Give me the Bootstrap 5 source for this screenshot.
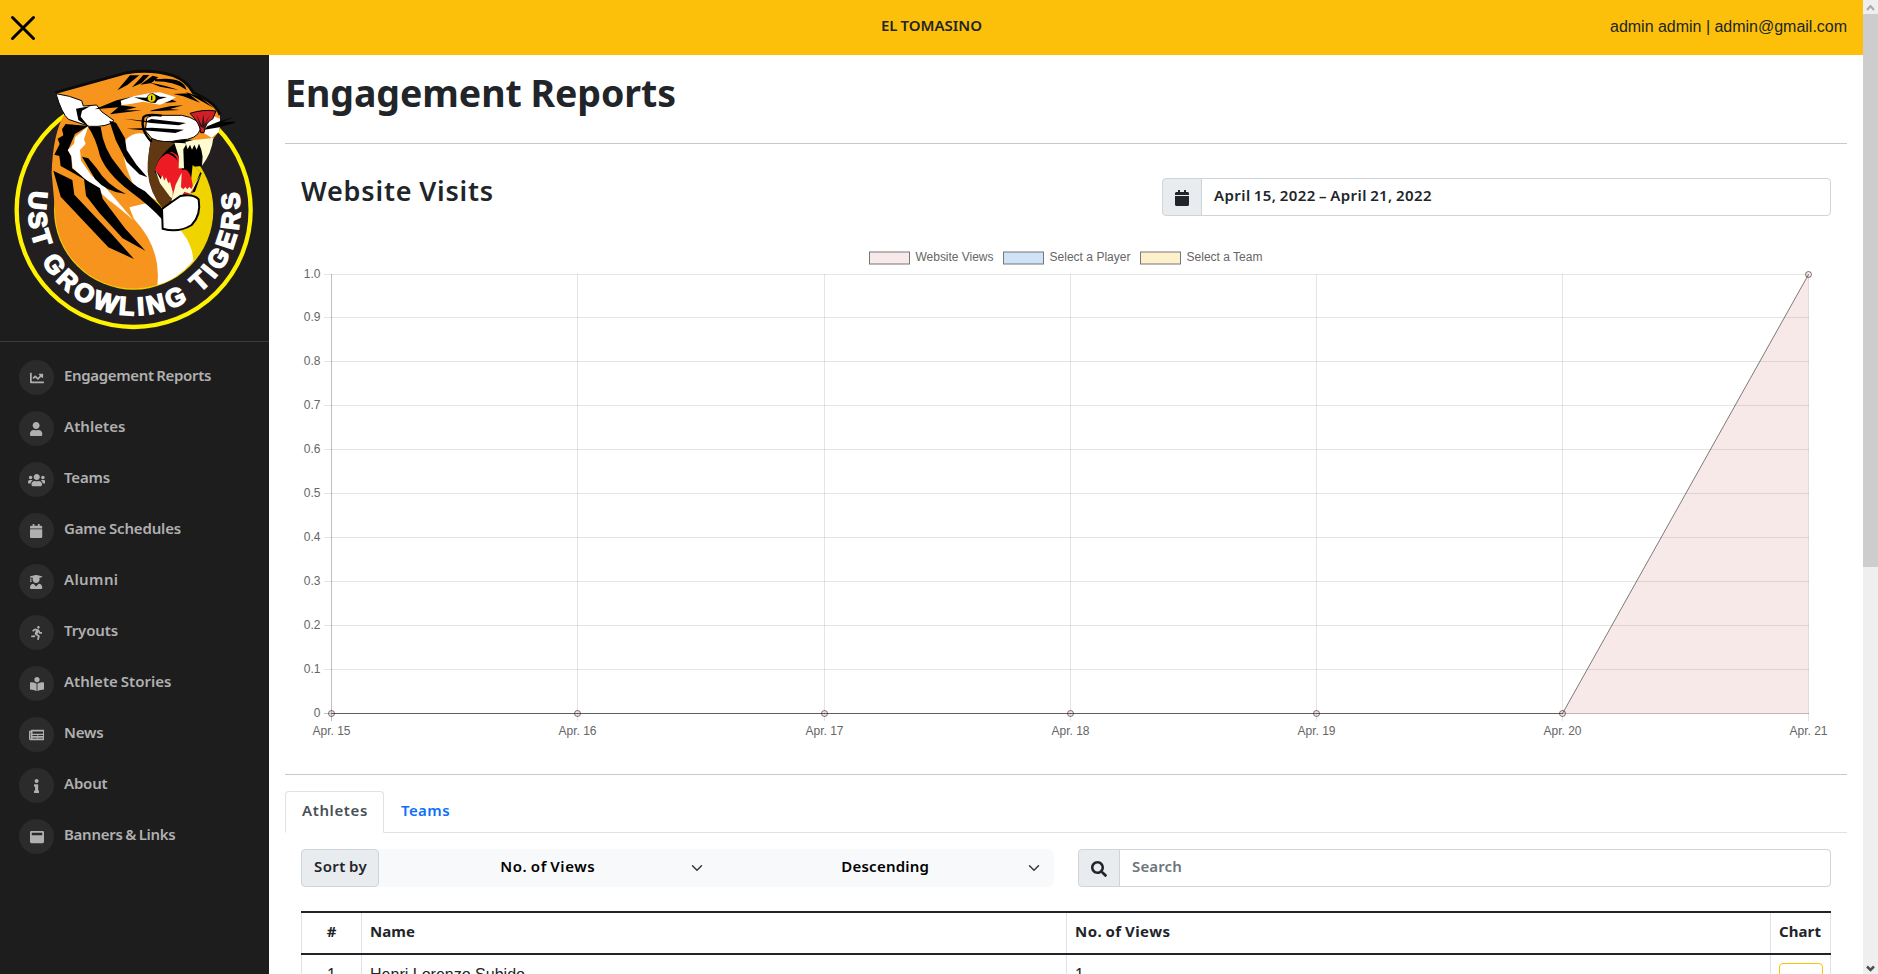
<!DOCTYPE html>
<html lang="en">
<head>
<meta charset="utf-8">
<title>Engagement Reports</title>
<link rel="stylesheet" href="https://cdn.jsdelivr.net/npm/bootstrap@5.3.0/dist/css/bootstrap.min.css">
<style>
body{height:974px;overflow:hidden;font-family:"Liberation Sans",Arial,sans-serif;color:#212529;background:#fff}
.brandfont{font-family:"Noto Sans",sans-serif;font-weight:600;font-size:15px}
.brandfont span,.fit{white-space:nowrap}
.brandfont .fit,.form-control .fit{word-spacing:-1px}
.topbar{height:55px;background:#fcc00a;padding:0 16px 0 8px}
.side{width:269px;background:#1d1d1d}
.logo-box{height:287px;border-bottom:1px solid #3c3c3c}
.menu{padding-top:10px}
.menu a{height:51px;padding-left:19px;gap:10px;color:#b0b0b0;text-decoration:none}
.menu a>span{margin-top:-4px}
.dot{width:35px;height:35px;background:#2b2b2b;border-radius:50%}
.dot svg,.input-group-text svg{height:14px;fill:currentColor;display:block}
.body-pane{width:1594px;padding:0 16px}
.page-title{font-size:37.5px;font-weight:700;height:88px;line-height:46px;padding-top:15px}
hr.rule{margin:0;border:0;height:1px;background:#c8c9ca;opacity:1}
.sub{font-size:27px;line-height:36px;height:36px}
.visits{height:67px;padding:34px 16px 0}
.input-group-text,.form-control{height:38px}
.dates{width:669px}
.form-control,.input-group-text{font-family:"Noto Sans",sans-serif;font-size:15px;font-weight:600;color:#212529}
.input-group-text,.form-control{padding-top:5px;padding-bottom:9px;border-color:#ced4da;background-color:#fff}
.input-group-text{background:#e9ecef}
.input-group-text.pic{padding:1px 12px 0}
.form-control.search{color:#6c757d}
.form-control{border-radius:4px}
.input-group-text{border-radius:4px}
.chart{display:block;margin:0 0 0 16px;font:12px "Liberation Sans",Arial,sans-serif}
.nav-tabs{border-color:#dee2e6;height:42px}
.nav-tabs .nav-link{height:42px;padding:6px 16px;line-height:24px;color:#0d6efd;border-radius:4px 4px 0 0}
.nav-tabs .nav-link.active{color:#495057;width:99px}
.filters{padding:16px 16px 0;gap:24px}
.sorter{width:753px;flex:none}
.pick{width:337.5px;height:38px;background:#f8f9fa;color:#000;position:relative;padding-bottom:3px}
.pick svg{position:absolute;right:14px;top:13px}
.grid-wrap{padding:24px 16px 0}
.grid-wrap table{width:1530px;table-layout:fixed;border-collapse:collapse}
.grid-wrap th,.grid-wrap td{border-left:1px solid #dee2e6;border-right:1px solid #dee2e6;padding:8px;vertical-align:top;line-height:24px}
.grid-wrap th{border-top:2px solid #212529;border-bottom:2px solid #212529;height:42px;font-weight:700;padding:6px 8px}
.outline{height:34px;width:44px;border:1px solid #ffc107;border-radius:4px}
.sbar{width:15px;background:#efefef;height:974px}
.sbar .thumb{height:553px;background:#cdcdcd}
</style>
</head>
<body>
<div class="d-flex">
<div style="width:1863px">
<header class="topbar d-flex align-items-center position-relative">
<svg width="30" height="30" viewBox="0 0 30 30"><path d="M4.500 4.500L25.500 25.500M25.500 4.500L4.500 25.500" stroke="#000" stroke-width="3" stroke-linecap="round"/></svg>
<div class="brandfont position-absolute start-50 translate-middle-x" style="top:14px"><span class="fit" data-w="101">EL TOMASINO</span></div>
<div class="ms-auto" style="margin-top:-2px"><span class="fit" data-w="237">admin admin | admin@gmail.com</span></div>
</header>
<div class="d-flex">
<aside class="side" style="height:919px">
<div class="logo-box">
<svg width="269" height="286" viewBox="0 15 807 858">
<circle cx="401" cy="480" r="351" fill="#231f20" stroke="#fff200" stroke-width="13"/>
<circle cx="401" cy="480" r="239" fill="#f0d400"/>
<path d="M399 498L385 470L450 440L545 545Q578 585 580 632Q530 690 472 705Z" fill="#fff"/>
<path d="M165 128L380 68Q455 56 520 77Q560 92 580 128Q650 160 660 195L660 240L640 266L530 275L450 262L440 360L470 452L388 472L400 505Q485 595 472 704A235 235 0 0 1 165 480L155 370Q158 250 195 190Z" fill="#f7941d"/>
<path d="M165 128L380 68Q455 56 520 77Q560 92 580 128Q650 160 660 195" fill="none" stroke="#0b0b0b" stroke-width="9"/>
<!-- ear and cheek fur -->
<path d="M168 131L208 139L245 152L250 168L290 165L305 185L342 212Q325 232 268 229L205 208Q185 190 168 131Z" fill="#fff" stroke="#000" stroke-width="3"/>
<path d="M228 176L272 168L246 182L242 200L268 232L235 210Z"/>
<path d="M376 270Q405 240 438 254L458 280L444 370L470 452L402 410L380 355Q365 310 376 270Z" fill="#fff"/>
<!-- neck and shoulder stripes -->
<path d="M197 222L265 228L225 252L204 300L214 320L216 355L250 380L300 415L310 425L306 430L252 388L225 372L182 348L178 318L163 314L179 282L173 266L190 256L186 238Z"/>
<path d="M265 228L252 268L257 282L240 300L243 332L275 377L310 405Q345 445 400 510Q360 475 325 449L218 354L214 318L203 300L222 281L225 262Z" fill="#fff"/>
<path d="M160 362L217 390L223 434L335 552L402 627L325 592L182 440Z"/>
<path d="M252 386L300 415L308 446L376 536L436 602L368 565L299 490L258 437Z"/>
<path d="M264 230L302 230Q310 300 355 350Q390 402 435 424L484 472L488 510Q450 468 390 424Q320 370 300 318Q288 265 264 230Z"/>
<path d="M328 212L348 218L375 265L380 300L410 345L442 382L418 373L380 335L347 270Z"/>
<path d="M246 320L265 325L290 355Q320 405 378 432Q320 427 285 387Z"/>
<!-- forehead and cheek stripes -->
<path d="M352 121L390 76L418 76L382 105ZM396 112L430 75L448 75L425 99ZM421 104L458 77L475 82L454 99ZM465 88Q550 78 560 120Q525 94 465 94ZM450 98Q500 107 536 120L480 110ZM520 132L565 130L600 158L550 139ZM555 125L600 140L641 174Z"/>
<path d="M284 178L350 151L402 139L370 152L362 166L410 172L375 181L425 181L330 193L355 172ZM455 181L510 169L550 166L510 177L540 180L450 184ZM460 126L485 132L530 156L478 160L515 145Z"/>
<path d="M362 152L400 139L455 128L480 127L528 142L510 152L480 164L430 155L390 162L365 166Z" fill="#fff"/>
<path d="M402 142L438 143L458 130L480 140L501 141L474 149L466 159L444 155Z"/>
<circle cx="455" cy="144" r="13" fill="#f0dc00" stroke="#000" stroke-width="2"/><path d="M453 137h4v14h-4z"/>
<!-- open mouth -->
<path d="M454 262Q438 340 450 400Q464 445 490 477L545 438L585 425L605 370L582 350L604 348L610 280L580 270Z" fill="#000"/>
<path d="M578 345L601 366L575 430L571 410Z" fill="#f0d400"/>
<path d="M457 263L524 280Q468 325 464 365L520 445L490 477Q448 430 443 365Q441 310 457 263Z" fill="#603913"/>
<path d="M465 360Q475 315 515 305Q550 320 545 360Q570 350 578 405L578 428L515 440Q495 390 465 360Z" fill="#ed1c24"/>
<path d="M500 305Q525 305 535 335Q520 315 500 310Z"/>
<path d="M466 360L482 388L487 376L493 392L498 382L505 400L510 395L518 425V446L510 440L480 400Z" fill="#fffbd0"/>
<path d="M523 278L556 280L558 284L550 298L552 355H536L537 322ZM556 276L563 298L570 284L576 299L583 284L590 299L597 281L604 299L608 320L606 347Q635 310 640 264L580 270ZM545 368L527 404L514 454L540 448L553 425L570 431L606 369L574 417L568 411L562 418L556 411L550 418L543 412Z" fill="#fffbd0"/>
<path d="M486 477Q505 463 541 438Q581 430 596 448Q604 495 575 525Q535 550 488 536Z" fill="#fff" stroke="#000" stroke-width="6"/>
<!-- muzzle -->
<path d="M436 242L440 206Q445 195 486 196H545Q600 205 601 238Q592 269 540 270Q490 282 455 265Z" fill="#fff" stroke="#000" stroke-width="3"/>
<path d="M455 276Q420 240 430 202Q438 190 485 197" fill="none" stroke="#000" stroke-width="7"/>
<path d="M454 207L558 219L536 226L454 219L372 206L441 213ZM455 233L552 239L526 249L380 236Z"/>
<path d="M611 249Q615 220 641 199L660 206L657 245L635 263Z" fill="#fff"/>
<path d="M622 229L655 215L705 200L665 216L706 215L705 218L658 232L613 239Z"/>
<path d="M570 190Q610 177 648 183L638 207Q617 215 612 248L602 248Q601 220 570 190Z" fill="#cf2027" stroke="#000" stroke-width="3"/>
<path d="M590 195L605 225L610 193L614 223L628 196L613 236L600 229Z" fill="#411"/>
<path id="ring" d="M91 422A317 317 0 1 0 711 404" fill="none"/>
<text fill="#fff" stroke="#fff" stroke-width="5" font-family="Liberation Sans,Arial,sans-serif" font-weight="700" font-size="76"><textPath href="#ring" textLength="1105" lengthAdjust="spacing">UST GROWLING TIGERS</textPath></text>
</svg>
</div>
<nav class="menu brandfont d-flex flex-column" id="menu"></nav>
</aside>
<main class="body-pane">
<h1 class="page-title brandfont m-0"><span class="fit" data-w="391">Engagement Reports</span></h1>
<hr class="rule">
<div class="visits d-flex justify-content-between">
<h2 class="sub brandfont m-0" style="margin-top:-5px!important"><span class="fit" data-w="193">Website Visits</span></h2>
<div class="input-group dates">
<span class="input-group-text pic"><svg viewBox="0 0 448 512" style="height:16px"><use href="#cal"/></svg></span>
<div class="form-control"><span class="fit" data-w="218">April 15, 2022 – April 21, 2022</span></div>
</div>
</div>
<svg class="chart" id="chart" width="1546" height="563" viewBox="301 211 1546 563"></svg>
<hr class="rule">
<ul class="nav nav-tabs brandfont" style="margin-top:16px">
<li class="nav-item"><a class="nav-link active"><span class="fit" data-w="66">Athletes</span></a></li>
<li class="nav-item"><a class="nav-link"><span class="fit" data-w="49">Teams</span></a></li>
</ul>
<div class="filters d-flex brandfont">
<div class="sorter d-flex">
<div class="input-group-text" style="width:78px"><span class="fit" data-w="53">Sort by</span></div>
<div class="pick d-flex align-items-center justify-content-center"><span class="fit" data-w="95">No. of Views</span><svg width="12" height="12" viewBox="0 0 16 16"><path d="M2 5l6 6 6-6" fill="none" stroke="#343a40" stroke-width="2" stroke-linecap="round" stroke-linejoin="round"/></svg></div>
<div class="pick rounded-end d-flex align-items-center justify-content-center"><span class="fit" data-w="88">Descending</span><svg width="12" height="12" viewBox="0 0 16 16"><path d="M2 5l6 6 6-6" fill="none" stroke="#343a40" stroke-width="2" stroke-linecap="round" stroke-linejoin="round"/></svg></div>
</div>
<div class="input-group">
<span class="input-group-text pic"><svg viewBox="0 0 512 512" style="height:16px"><path d="M505 442.700L405.300 343c-4.500-4.500-10.600-7-17-7H372c27.600-35.300 44-79.700 44-128C416 93.100 322.900 0 208 0S0 93.100 0 208s93.100 208 208 208c48.300 0 92.700-16.400 128-44v16.300c0 6.400 2.500 12.500 7 17l99.700 99.700c9.400 9.400 24.600 9.400 33.900 0l28.300-28.300c9.400-9.400 9.400-24.600.1-34zM208 336c-70.700 0-128-57.200-128-128 0-70.700 57.200-128 128-128 70.700 0 128 57.200 128 128 0 70.700-57.200 128-128 128z"/></svg></span>
<div class="form-control search"><span class="fit" data-w="50">Search</span></div>
</div>
</div>
<div class="grid-wrap">
<table>
<colgroup><col style="width:60px"><col style="width:705px"><col style="width:704px"><col style="width:60px"></colgroup>
<thead class="brandfont"><tr><th class="text-center">#</th><th><span class="fit" data-w="45">Name</span></th><th><span class="fit" data-w="95.500">No. of Views</span></th><th><span class="fit" data-w="42">Chart</span></th></tr></thead>
<tbody><tr><td class="text-center">1</td><td><span class="fit" data-w="155">Henri Lorenzo Subido</span></td><td>1</td><td><div class="outline"></div></td></tr></tbody>
</table>
</div>
</main>
</div>
</div>
<div class="sbar">
<svg width="15" height="14" class="d-block"><path d="M4 10l3.500-4 3.500 4" fill="none" stroke="#a8a8a8" stroke-width="2"/></svg>
<div class="thumb"></div>
<svg width="15" height="14" class="d-block" style="margin-top:393px"><path d="M4 6.500l3.500 3.500 3.500-3.500" fill="none" stroke="#505050" stroke-width="2.500"/></svg>
</div>
</div>
<svg width="0" height="0" class="position-absolute"><defs><path id="cal" d="M12 192h424c6.600 0 12 5.400 12 12v260c0 26.500-21.500 48-48 48H48c-26.500 0-48-21.500-48-48V204c0-6.600 5.400-12 12-12zm436-44v-36c0-26.500-21.500-48-48-48h-48V12c0-6.600-5.400-12-12-12h-40c-6.600 0-12 5.400-12 12v52H160V12c0-6.600-5.400-12-12-12h-40c-6.600 0-12 5.400-12 12v52H48C21.500 64 0 85.500 0 112v36c0 6.600 5.400 12 12 12h424c6.600 0 12-5.400 12-12z"/></defs></svg>
<script src="https://cdn.jsdelivr.net/npm/bootstrap@5.3.0/dist/js/bootstrap.bundle.min.js"></script>
<script>
// sidebar entries: label, text width, icon view width, icon path
const items = [
["Engagement Reports",147,512,"M496 384H64V80c0-8.840-7.160-16-16-16H16C7.160 64 0 71.160 0 80v336c0 17.670 14.330 32 32 32h464c8.840 0 16-7.160 16-16v-32c0-8.840-7.160-16-16-16zM464 96H345.940c-21.380 0-32.090 25.850-16.970 40.970l32.400 32.400L288 242.750l-73.370-73.370c-12.500-12.500-32.760-12.500-45.250 0l-68.690 68.690c-6.250 6.250-6.250 16.380 0 22.630l22.620 22.620c6.250 6.250 16.380 6.250 22.630 0L192 237.250l73.370 73.370c12.500 12.500 32.760 12.500 45.250 0l96-96 32.400 32.400c15.120 15.120 40.970 4.410 40.970-16.970V112c.01-8.840-7.150-16-15.990-16z"],
["Athletes",61.5,448,"M224 256c70.700 0 128-57.300 128-128S294.700 0 224 0 96 57.300 96 128s57.300 128 128 128zm89.600 32h-16.700c-22.200 10.200-46.900 16-72.900 16s-50.600-5.800-72.900-16h-16.700C60.200 288 0 348.200 0 422.400V464c0 26.500 21.500 48 48 48h352c26.500 0 48-21.500 48-48v-41.600c0-74.200-60.200-134.400-134.400-134.400z"],
["Teams",46,640,"M96 224c35.300 0 64-28.700 64-64s-28.700-64-64-64-64 28.700-64 64 28.700 64 64 64zm448 0c35.300 0 64-28.700 64-64s-28.700-64-64-64-64 28.700-64 64 28.700 64 64 64zm32 32h-64c-17.600 0-33.500 7.100-45.100 18.600 40.300 22.100 68.900 62 75.100 109.400h66c17.700 0 32-14.300 32-32v-32c0-35.300-28.700-64-64-64zm-256 0c61.900 0 112-50.100 112-112S381.900 32 320 32 208 82.100 208 144s50.100 112 112 112zm76.800 32h-8.300c-20.800 10-43.900 16-68.500 16s-47.600-6-68.500-16h-8.300C179.600 288 128 339.600 128 403.200V432c0 26.500 21.500 48 48 48h288c26.500 0 48-21.500 48-48v-28.800c0-63.600-51.600-115.200-115.200-115.200zm-223.700-13.400C161.500 263.100 145.600 256 128 256H64c-35.300 0-64 28.700-64 64v32c0 17.700 14.300 32 32 32h65.900c6.300-47.400 34.900-87.300 75.200-109.400z"],
["Game Schedules",117,448,document.getElementById("cal").getAttribute("d")],
["Alumni",54.5,448,"M319.400 320.600L224 416l-95.400-95.400C57.100 323.700 0 382.200 0 454.400v9.600c0 26.500 21.500 48 48 48h352c26.500 0 48-21.500 48-48v-9.600c0-72.200-57.100-130.700-128.600-133.800zM13.600 79.800l6.400 1.500v58.400c-7 4.200-12 11.500-12 20.300 0 8.400 4.600 15.400 11.100 19.700L3.500 242c-1.700 6.900 2.100 14 7.600 14h41.800c5.500 0 9.300-7.100 7.600-14l-15.600-62.300C51.400 175.400 56 168.400 56 160c0-8.800-5-16.100-12-20.300V87.100l66 15.900c-8.600 17.200-14 36.400-14 57 0 70.700 57.300 128 128 128s128-57.300 128-128c0-20.600-5.300-39.800-14-57l96.300-23.200c18.200-4.400 18.200-27.100 0-31.500l-190.400-46c-13-3.100-26.700-3.100-39.700 0L13.600 48.200c-18.100 4.400-18.100 27.200 0 31.600z"],
["Tryouts",54,416,"M272 96c26.510 0 48-21.490 48-48S298.510 0 272 0s-48 21.490-48 48 21.490 48 48 48zM113.690 317.470l-14.800 34.520H32c-17.670 0-32 14.330-32 32s14.330 32 32 32h77.450c19.250 0 36.580-11.440 44.110-29.090l8.790-20.520-10.670-6.300c-17.320-10.230-30.060-25.370-37.990-42.610zM384 223.990h-44.030l-26.060-53.250c-12.500-25.550-35.450-44.230-61.780-50.940l-71.080-21.140c-28.300-6.800-57.770-.55-80.840 17.140l-39.670 30.410c-14.030 10.750-16.690 30.830-5.920 44.860s30.840 16.660 44.860 5.920l39.690-30.410c7.670-5.890 17.440-8 25.270-6.140l14.700 4.370-37.460 87.390c-12.620 29.480-1.310 64.010 26.300 80.310l84.980 50.170-27.470 87.730c-5.280 16.860 4.110 34.810 20.970 40.090 3.190 1 6.410 1.480 9.580 1.480 13.610 0 26.230-8.770 30.520-22.450l31.640-101.060c5.910-20.770-2.890-43.080-21.640-54.390l-61.240-36.140 31.310-78.280 20.270 41.430c8 16.340 24.920 26.890 43.110 26.890H384c17.670 0 32-14.330 32-32s-14.330-31.990-32-31.990z"],
["Athlete Stories",107.5,512,"M352 96c0-53.020-42.980-96-96-96s-96 42.980-96 96 42.980 96 96 96 96-42.980 96-96zM233.590 241.100c-59.330-36.320-155.430-46.300-203.790-49.050C13.550 191.130 0 203.510 0 219.140v222.800c0 14.330 11.590 26.280 26.490 27.050 43.660 2.290 131.990 10.680 193.040 41.430 9.370 4.720 20.480-1.710 20.480-11.870V252.560c-.01-4.670-2.320-8.950-6.420-11.460zm248.610-49.050c-48.350 2.740-144.460 12.730-203.780 49.050-4.100 2.510-6.410 6.960-6.410 11.630v245.790c0 10.190 11.140 16.630 20.540 11.900 61.040-30.720 149.320-39.110 192.970-41.400 14.900-.78 26.490-12.730 26.490-27.060V219.140c-.01-15.630-13.560-28.010-29.810-27.090z"],
["News",39.5,576,"M88 64H552Q576 64 576 88V400Q576 448 528 448H56Q0 448 0 392V120Q0 96 24 96H64V88Q64 64 88 64zM48 144V392Q48 400 56 400Q64 400 64 392V144zM128 128V208H512V128zM128 256V288H304V256zM336 256V288H512V256zM128 352V384H304V352zM336 352V384H512V352z"],
["About",43.5,192,"M20 424.229h20V279.771H20c-11.046 0-20-8.954-20-20V212c0-11.046 8.954-20 20-20h112c11.046 0 20 8.954 20 20v212.229h20c11.046 0 20 8.954 20 20V492c0 11.046-8.954 20-20 20H20c-11.046 0-20-8.954-20-20v-47.771c0-11.046 8.954-20 20-20zM96 0C56.235 0 24 32.235 24 72s32.235 72 72 72 72-32.235 72-72S135.764 0 96 0z"],
["Banners & Links",111.5,512,"M48 32H464Q512 32 512 80V432Q512 480 464 480H48Q0 480 0 432V80Q0 32 48 32zM64 108V180Q64 192 76 192H436Q448 192 448 180V108Q448 96 436 96H76Q64 96 64 108z"]];
document.getElementById("menu").innerHTML = items.map(([t,w,v,d]) => `<a class="d-flex align-items-center"><i class="dot d-flex align-items-center justify-content-center"><svg viewBox="0 0 ${v} 512"><path fill-rule="evenodd" d="${d}"/></svg></i><span class="fit" data-w="${w}">${t.replace("&","&amp;")}</span></a>`).join("");

// line chart
const px=i=>Math.floor(331.6+246.2*i)+.5, py=i=>Math.floor(713.02-43.9*i)+.5;
let s="";
for(let i=0;i<=10;i++) s+=`<path d="M324 ${py(i)}H1809" stroke="#000" stroke-opacity="${i?.1:.25}"/><text x="320.5" y="${py(i)+3}" text-anchor="end" fill="#666">${i==0?"0":(i/10).toFixed(1)}</text>`;
for(let i=0;i<7;i++) s+=`<path d="M${px(i)} 274V721" stroke="#000" stroke-opacity="${i?.1:.25}"/><text x="${px(i)}" y="735" text-anchor="middle" fill="#666">Apr. ${15+i}</text>`;
s+=`<path d="M${px(5)} 713.500L1808.500 274.500V713.500Z" fill="rgb(200,70,75)" fill-opacity=".12"/><path d="M331.500 713.500H${px(5)}L1808.500 274.500" fill="none" stroke="#000" stroke-opacity=".5"/>`;
for(let i=0;i<7;i++) s+=`<circle cx="${px(i)}" cy="${i==6?274.5:713.5}" r="3" fill="rgb(200,70,75)" fill-opacity=".13" stroke="#000" stroke-opacity=".5"/>`;
[["Website Views",869.5,"#f8e9ea",78],["Select a Player",1003.5,"#cfe2f6",81],["Select a Team",1140.5,"#fff0cc",76]].forEach(([t,x,c,w])=>s+=`<rect x="${x}" y="252" width="40" height="12" fill="${c}" stroke="#777"/><text x="${x+46}" y="261" fill="#666" textLength="${w}">${t}</text>`);
document.getElementById("chart").innerHTML=s;

// spread each label over its designed width
document.querySelectorAll(".fit").forEach(e=>{const n=e.textContent.length; e.style.letterSpacing=((+e.dataset.w-e.getBoundingClientRect().width)/n).toFixed(3)+"px";});
</script>
</body>
</html>
